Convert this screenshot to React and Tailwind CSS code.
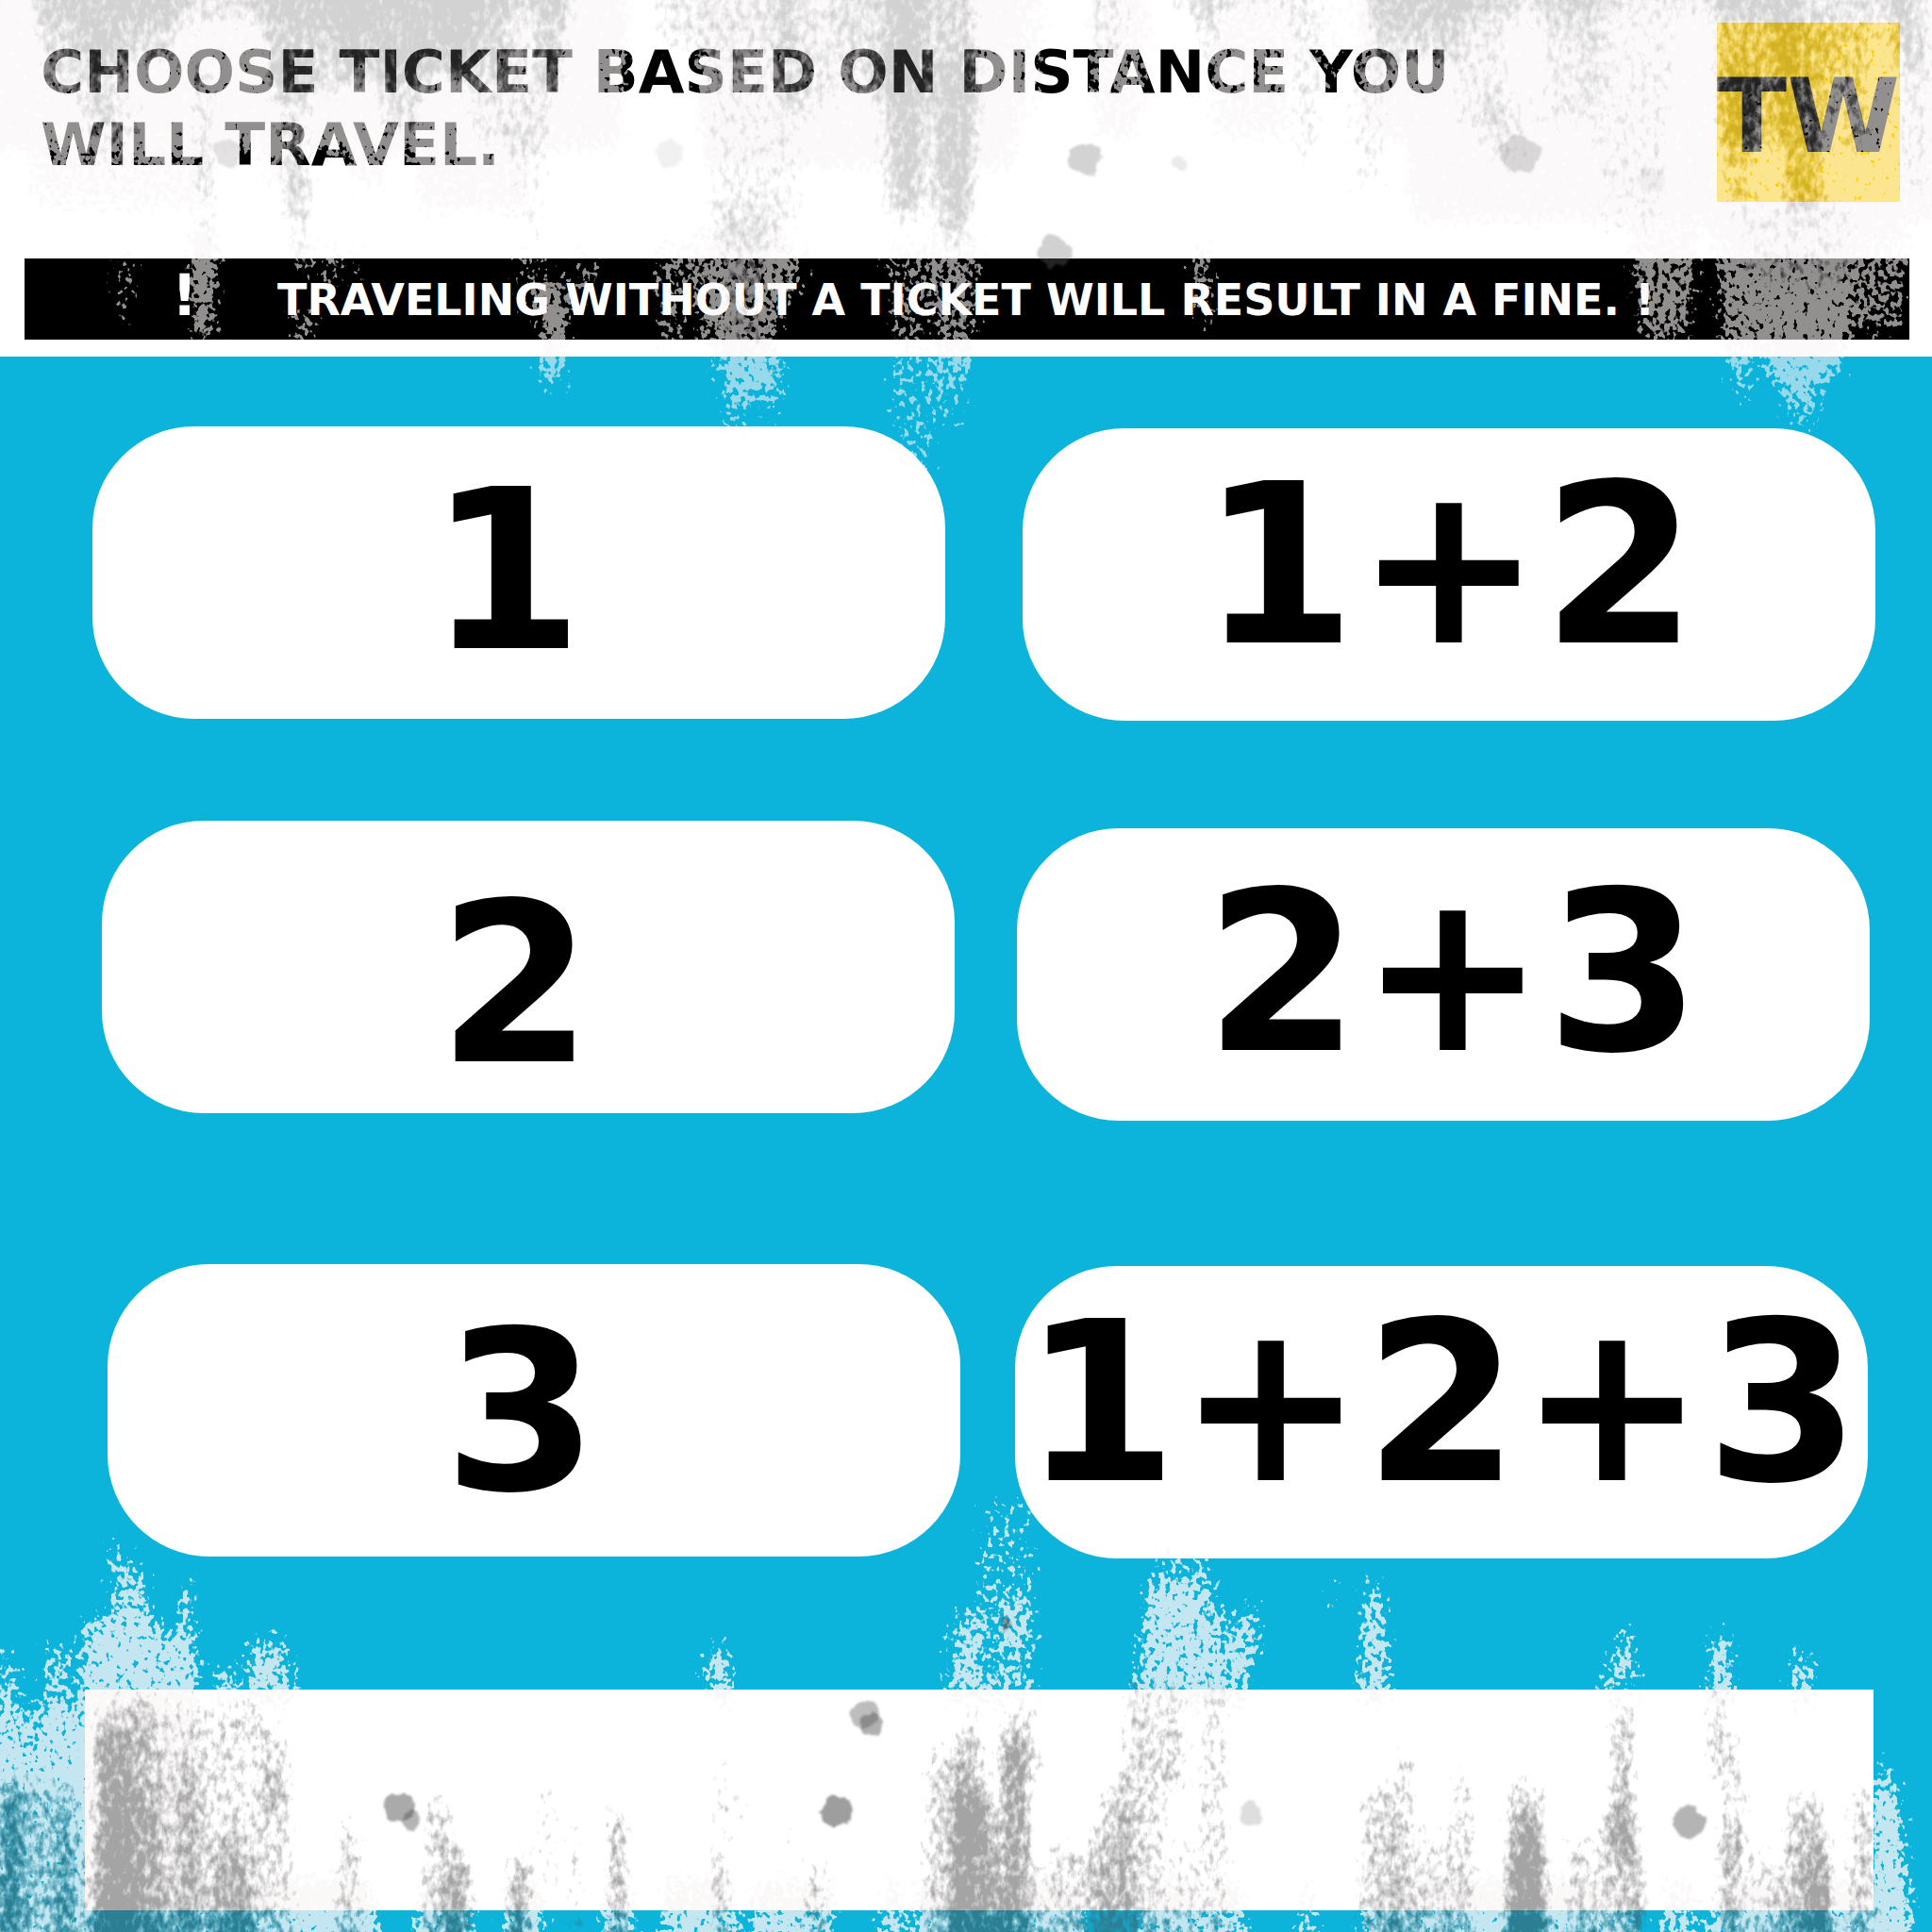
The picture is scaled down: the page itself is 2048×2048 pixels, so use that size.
import React from "react";

// Weathering streaks: [centre x, width, top y, bottom y, strength]
const TOP_LIGHT = [
  [320, 700, -80, 160, 1], [130, 220, 90, 225, 0.66], [300, 60, 110, 200, 0.72], [390, 70, 110, 200, 0.72],
  [500, 140, 110, 225, 0.85], [640, 60, 20, 90, 0.42],
  [910, 360, -80, 180, 1], [1070, 90, -60, 120, 0.66], [1185, 80, -60, 150, 0.76], [1325, 110, -60, 150, 0.76],
  [1400, 60, -60, 110, 0.5], [1500, 140, -60, 150, 0.9], [1800, 640, -80, 235, 1], [1910, 230, 20, 250, 1],
  [132, 28, 262, 336, 0.52], [216, 34, 240, 360, 1], [320, 30, 250, 292, 0.7],
  [322, 28, 326, 366, 0.72], [350, 28, 250, 306, 0.58], [380, 34, 262, 292, 0.48],
  [560, 36, 262, 330, 0.46], [586, 40, 296, 410, 0.86], [622, 30, 262, 320, 0.54],
  [712, 46, 250, 370, 0.56], [760, 60, 240, 380, 0.66], [796, 80, 230, 420, 0.76],
  [782, 46, 380, 462, 0.5], [820, 34, 380, 450, 0.42], [840, 44, 250, 316, 0.56],
  [962, 54, 250, 390, 0.54], [1012, 64, 240, 400, 0.66], [968, 64, 390, 510, 0.42],
  [1010, 44, 380, 450, 0.4], [1275, 26, 250, 350, 0.7], [1765, 80, 240, 360, 0.76],
  [1845, 60, 240, 380, 0.82], [1912, 110, 220, 400, 0.92], [1985, 90, 240, 355, 0.62],
  [1845, 34, 370, 420, 0.56], [1905, 60, 360, 426, 0.68], [1912, 50, 405, 456, 0.5],
];

const TOP_DARK = [
  [320, 600, -70, 30, 0.5], [60, 60, -60, 80, 0.44], [135, 130, -60, 72, 0.52], [75, 60, 60, 110, 0.38],
  [110, 50, 30, 140, 0.44], [120, 80, 100, 200, 0.32], [330, 120, -60, 100, 0.58],
  [310, 50, 50, 230, 0.44], [318, 30, 170, 300, 0.42], [215, 36, 60, 200, 0.42],
  [218, 28, 170, 280, 0.38], [430, 160, -60, 85, 0.6], [425, 70, 40, 150, 0.5],
  [500, 100, -60, 80, 0.48], [540, 110, 40, 160, 0.4], [585, 40, -60, 100, 0.5],
  [560, 60, 130, 260, 0.28], [770, 170, -60, 60, 0.44], [860, 90, -60, 120, 0.42],
  [960, 46, -60, 235, 0.6], [1012, 54, -60, 265, 0.6], [940, 110, -60, 100, 0.5],
  [800, 120, 60, 260, 0.35], [790, 70, 220, 370, 0.36], [985, 130, 60, 230, 0.38],
  [1175, 60, -60, 70, 0.4], [1280, 44, -60, 70, 0.45], [1300, 160, -60, 16, 0.42],
  [1385, 50, -60, 170, 0.4], [1500, 120, -60, 70, 0.56], [1740, 600, -70, 22, 0.48],
  [1570, 80, -60, 150, 0.37], [1450, 60, 60, 210, 0.32], [1600, 70, 100, 190, 0.34],
  [1665, 80, -60, 140, 0.4], [1730, 100, 30, 250, 0.33], [1860, 100, -60, 160, 0.48],
  [1912, 64, 20, 225, 0.58], [1965, 50, 20, 170, 0.44], [1840, 50, 60, 220, 0.42],
  [1905, 140, 205, 310, 0.34], [2022, 60, -60, 70, 0.52], [2030, 50, 40, 210, 0.38],
];

const BOTTOM_LIGHT = [
  [125, 34, 1632, 1668, 0.5], [138, 56, 1662, 1750, 0.72], [196, 28, 1670, 1790, 0.66],
  [128, 110, 1715, 2100, 0.9], [190, 60, 1730, 2100, 0.84], [8, 34, 1750, 1900, 0.68],
  [60, 46, 1740, 1900, 0.66], [40, 130, 1810, 2100, 0.66], [40, 120, 1870, 2100, 1],
  [238, 36, 1762, 1810, 0.64], [285, 64, 1738, 1810, 0.78], [765, 30, 1742, 1810, 0.8],
  [752, 34, 1755, 1785, 0.48], [1065, 80, 1590, 1740, 0.4], [1026, 56, 1712, 1810, 0.72],
  [1076, 50, 1690, 1810, 0.6], [1255, 86, 1640, 1720, 0.52], [1245, 90, 1680, 1810, 0.84],
  [1300, 60, 1716, 1810, 0.7], [1325, 28, 1700, 1765, 0.7], [1456, 38, 1680, 1810, 0.82],
  [1415, 26, 1680, 1700, 0.46], [1722, 34, 1726, 1770, 0.66], [1715, 56, 1765, 1810, 0.54],
  [1824, 34, 1730, 1810, 0.86], [1910, 38, 1748, 1810, 0.7], [1996, 34, 1870, 1960, 0.74],
  [2000, 50, 1900, 2100, 0.84], [2004, 60, 1970, 2100, 0.86], [240, 340, 1990, 2120, 1],
  [370, 70, 1990, 2120, 0.7], [470, 80, 1990, 2120, 0.94], [555, 60, 1990, 2120, 0.94],
  [655, 46, 1990, 2120, 0.94], [740, 100, 1990, 2120, 0.86], [840, 110, 1990, 2120, 0.82],
  [945, 36, 1990, 2120, 0.8], [1060, 200, 1990, 2120, 1], [1240, 90, 1990, 2120, 0.92],
  [1300, 60, 1990, 2120, 0.8], [1385, 26, 1990, 2120, 0.68], [1590, 310, 1990, 2120, 1],
  [1780, 60, 1990, 2120, 0.7], [1900, 190, 1990, 2120, 0.96],
];

const BOTTOM_DARK = [
  [30, 90, 1880, 2120, 0.42], [10, 30, 1890, 2120, 0.5], [74, 32, 1890, 2120, 0.52],
  [130, 80, 1790, 1880, 0.38], [118, 54, 1830, 2120, 0.66], [140, 84, 1890, 2120, 0.52],
  [200, 150, 1800, 2120, 0.38], [200, 34, 1870, 2120, 0.44], [245, 50, 1950, 2120, 0.5],
  [290, 60, 1830, 2120, 0.4], [288, 30, 1875, 1915, 0.44], [270, 34, 1795, 1850, 0.34],
  [370, 44, 1930, 2120, 0.44], [465, 50, 1900, 2120, 0.46], [488, 36, 1960, 2120, 0.62],
  [550, 32, 1965, 2120, 0.72], [580, 26, 1880, 2000, 0.34], [610, 18, 1920, 2120, 0.46],
  [655, 28, 1910, 2120, 0.64], [764, 20, 1850, 2010, 0.4], [764, 20, 1980, 2120, 0.64],
  [786, 13, 1888, 1932, 0.6], [865, 50, 1975, 2120, 0.4], [835, 30, 1930, 1970, 0.34],
  [1028, 38, 1820, 1960, 0.56], [1032, 60, 1900, 2120, 0.74], [1076, 48, 1840, 2120, 0.7],
  [1000, 60, 1850, 2120, 0.44], [1080, 60, 1800, 1880, 0.34], [1180, 54, 1890, 2120, 0.46],
  [1140, 90, 1950, 2120, 0.42], [1210, 66, 1780, 2120, 0.42], [1245, 24, 1770, 1900, 0.52],
  [1252, 20, 1940, 2120, 0.48], [1286, 50, 1770, 2120, 0.37], [1460, 54, 1890, 2120, 0.46],
  [1488, 32, 1850, 2120, 0.48], [1552, 36, 1880, 2120, 0.46], [1520, 50, 1940, 2120, 0.4],
  [1617, 62, 1890, 2120, 0.58], [1620, 46, 1940, 2120, 0.66], [1672, 36, 1940, 2120, 0.48],
  [1720, 32, 1795, 1970, 0.58], [1715, 66, 1920, 2120, 0.46], [1738, 18, 1960, 2120, 0.56],
  [1820, 25, 1775, 1880, 0.5], [1838, 38, 1840, 1970, 0.38], [1834, 34, 1940, 2120, 0.58],
  [1870, 50, 1960, 2120, 0.38], [1915, 70, 1900, 2120, 0.52], [1928, 38, 1960, 2120, 0.6],
  [1974, 40, 1890, 2120, 0.5],
];

// Chips: [x, y, radius, opacity]
const TOP_CHIPS = [
  [1150, 168, 17, 0.31], [1612, 163, 20, 0.26], [1118, 266, 18, 0.32],
  [240, 162, 15, 0.2], [710, 162, 14, 0.1], [1252, 172, 8, 0.14], [1752, 190, 14, 0.08],
];
const BOTTOM_CHIPS = [
  [423, 1916, 17, 0.48], [434, 1930, 10, 0.42], [887, 1920, 18, 0.54],
  [916, 1818, 15, 0.36], [924, 1828, 12, 0.44], [1326, 1924, 13, 0.18],
  [1790, 1931, 17, 0.42], [1066, 1721, 7, 0.55],
];

// Each streak narrows toward its free end: downward at the top, upward at the bottom.
function Streaks({ data, rising }) {
  return data.map(([cx, w, y0, y1, s], i) => {
    const wide = w / 2;
    const thin = Math.max(w * 0.3, wide - 14);
    const top = rising ? thin : wide;
    const bottom = rising ? wide : thin;
    return (
      <polygon
        key={i}
        points={`${cx - top},${y0} ${cx + top},${y0} ${cx + bottom},${y1} ${cx - bottom},${y1}`}
        fillOpacity={s}
      />
    );
  });
}

function Speckle({ id, color, frequency, octaves, seed, blur, body, gain, slope, offset }) {
  return (
    <filter id={id} filterUnits="userSpaceOnUse" x="-60" y="-120" width="2168" height="2288" colorInterpolationFilters="sRGB">
      <feGaussianBlur in="SourceAlpha" stdDeviation={blur} result="shape" />
      <feTurbulence type="fractalNoise" baseFrequency={frequency} numOctaves={octaves} seed={seed} />
      <feColorMatrix values="0 0 0 0 0  0 0 0 0 0  0 0 0 0 0  1 0 0 0 0" result="noise" />
      <feComposite in="shape" in2="noise" operator="arithmetic" k2={body} k3={gain} k4="0" />
      <feComponentTransfer result="grain">
        <feFuncA type="linear" slope={slope} intercept={offset} />
      </feComponentTransfer>
      <feComponentTransfer in="shape" result="reach">
        <feFuncA type="linear" slope="20" intercept="-1" />
      </feComponentTransfer>
      <feComposite in="grain" in2="reach" operator="in" result="bounded" />
      <feFlood floodColor={color} />
      <feComposite in2="bounded" operator="in" />
    </filter>
  );
}

function Chips({ data, color }) {
  return (
    <g fill={color} filter="url(#rough)">
      {data.map(([x, y, r, o], i) => (
        <ellipse key={i} cx={x} cy={y} rx={r} ry={r * 0.95} fillOpacity={o} />
      ))}
    </g>
  );
}

function Weathering() {
  const dark = { frequency: "0.15 0.09", octaves: "3", seed: "8", blur: "8 15", body: "0.6", gain: "0.5", slope: "4", offset: "-1.8" };
  return (
    <svg
      aria-hidden="true"
      className="pointer-events-none absolute inset-0 h-full w-full"
      viewBox="0 0 2048 2048"
      preserveAspectRatio="none"
    >
      <defs>
        <Speckle id="light" color="#fbf6f7" frequency="0.17 0.15" octaves="2" seed="3" blur="8 11" body="0.44" gain="0.78" slope="16" offset="-10" />
        <Speckle id="topDark" color="#717171" {...dark} />
        <Speckle id="bottomDark" color="#4c4c4c" {...dark} />
        <Speckle id="cutout" color="#000000" {...dark} />
        <filter id="rough" x="-5%" y="-20%" width="110%" height="140%">
          <feTurbulence type="fractalNoise" baseFrequency="0.06" numOctaves="3" seed="5" />
          <feDisplacementMap in="SourceGraphic" scale="13" xChannelSelector="R" yChannelSelector="G" />
          <feGaussianBlur stdDeviation="1" />
        </filter>
        <mask id="topMask" maskUnits="userSpaceOnUse" x="0" y="0" width="2048" height="2048">
          <rect width="2048" height="2048" fill="#fff" />
          <g filter="url(#cutout)"><Streaks data={TOP_DARK} /></g>
        </mask>
        <mask id="bottomMask" maskUnits="userSpaceOnUse" x="0" y="0" width="2048" height="2048">
          <rect width="2048" height="2048" fill="#fff" />
          <g filter="url(#cutout)"><Streaks data={BOTTOM_DARK} rising /></g>
        </mask>
      </defs>
      <g mask="url(#topMask)" opacity="0.58">
        <g filter="url(#light)"><Streaks data={TOP_LIGHT} /></g>
      </g>
      <g filter="url(#topDark)" opacity="0.31"><Streaks data={TOP_DARK} /></g>
      <Chips data={TOP_CHIPS} color="#717171" />
      <g mask="url(#bottomMask)" opacity="0.77">
        <g filter="url(#light)"><Streaks data={BOTTOM_LIGHT} rising /></g>
      </g>
      <g filter="url(#bottomDark)" opacity="0.5"><Streaks data={BOTTOM_DARK} rising /></g>
      <Chips data={BOTTOM_CHIPS} color="#4c4c4c" />
    </svg>
  );
}

function Ticket({ label, className }) {
  return (
    <button
      type="button"
      className={`flex h-[310px] min-w-0 cursor-pointer items-start justify-center whitespace-nowrap rounded-[108px] bg-white text-[236px] leading-none font-bold text-black ${className}`}
    >
      {label}
    </button>
  );
}

export default function App() {
  return (
    <main className="relative flex min-h-screen flex-col overflow-hidden bg-[#0cb3da] font-['Verdana','DejaVu_Sans',sans-serif] font-bold text-black">
      <header className="bg-white pb-[18px]">
        <div className="flex h-[274px] items-start justify-between pt-6 pr-[34px] pl-[43px]">
          <h1 className="pt-[14px] text-[63px] leading-[77px] font-bold">
            CHOOSE TICKET BASED ON DISTANCE YOU
            <br />
            WILL TRAVEL.
          </h1>
          <div className="flex h-[190px] w-[194px] items-center justify-center bg-[#ffcf00] pt-2 text-[109px] leading-none">
            TW
          </div>
        </div>
        <p className="mr-6 ml-[26px] flex h-[86px] items-baseline bg-black pl-[156px] text-[46px] leading-[78px] whitespace-nowrap text-white">
          <span className="w-28 text-[60px]">!</span>
          <span>TRAVELING WITHOUT A TICKET WILL RESULT IN A FINE.</span>
          <span className="ml-4">!</span>
        </p>
      </header>

      <section aria-label="Tickets" className="flex flex-col pt-[74px]">
        <div className="grid grid-cols-2 items-start gap-[82px] pr-[60px] pl-[98px]">
          <Ticket label="1" className="pt-9 pr-7" />
          <Ticket label="1+2" className="mt-0.5 pt-7" />
        </div>
        <div className="mt-[106px] grid grid-cols-2 items-start gap-[66px] pr-[66px] pl-[108px]">
          <Ticket label="2" className="pt-14 pr-7" />
          <Ticket label="2+3" className="mt-2 pt-9 pl-5" />
        </div>
        <div className="mt-[152px] grid grid-cols-2 items-start gap-[58px] pr-[68px] pl-[114px]">
          <Ticket label="3" className="pt-10 pr-7" />
          <Ticket label="1+2+3" className="mt-0.5 pt-7" />
        </div>
      </section>

      <section aria-label="Payment" className="mt-[139px] mr-[62px] mb-[23px] ml-[90px] h-[234px] bg-white" />

      <Weathering />
    </main>
  );
}
